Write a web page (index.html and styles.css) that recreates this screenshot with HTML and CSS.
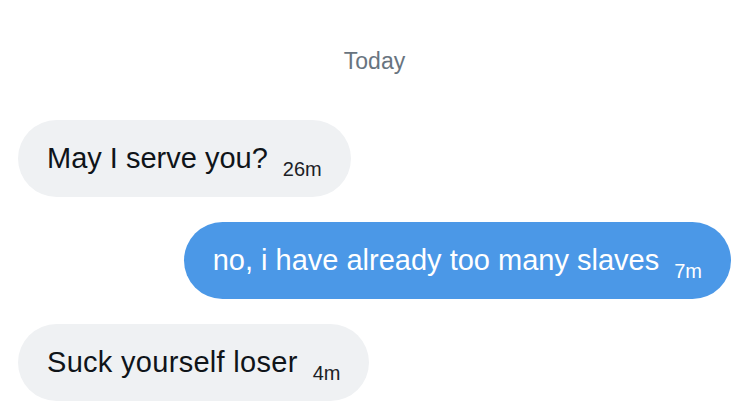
FILE: index.html
```html
<!DOCTYPE html>
<html lang="en">
<head>
<meta charset="utf-8">
<title>Messages</title>
<link rel="stylesheet" href="styles.css">
</head>
<body>
<main class="chat">
  <div class="day">Today</div>
  <div class="messages">
    <div class="bubble in"><span class="text">May I serve you?</span><span class="time">26m</span></div>
    <div class="bubble out"><span class="text">no, i have already too many slaves</span><span class="time">7m</span></div>
    <div class="bubble in"><span class="text">Suck yourself loser</span><span class="time">4m</span></div>
  </div>
</main>
</body>
</html>
```
FILE: styles.css
```css
html, body {
  margin: 0;
  padding: 0;
  background: #ffffff;
}

body {
  font-family: "Liberation Sans", Arial, sans-serif;
  color: #0f1419;
}

.chat {
  display: flex;
  flex-direction: column;
  padding: 48px 3px 0 18px;
}

.day {
  text-align: center;
  font-size: 23px;
  line-height: 26px;
  color: #687480;
}

.messages {
  display: flex;
  flex-direction: column;
  align-items: flex-start;
  gap: 25px;
  margin-top: 46px;
}

.bubble {
  display: inline-block;
  white-space: nowrap;
  height: 77px;
  line-height: 77px;
  font-size: 29px;
  padding: 0 29px;
  border-radius: 999px;
}

.bubble.in {
  background: #eff1f3;
  color: #0f1419;
}

.bubble.out {
  align-self: flex-end;
  background: #4b98e7;
  color: #ffffff;
}

.bubble.in:last-child .text {
  letter-spacing: 0.3px;
}

.time {
  display: inline-block;
  font-size: 20px;
  line-height: 20px;
  vertical-align: -8px;
  margin-left: 15px;
}

.bubble.in .time {
  color: #1c2126;
}
```
